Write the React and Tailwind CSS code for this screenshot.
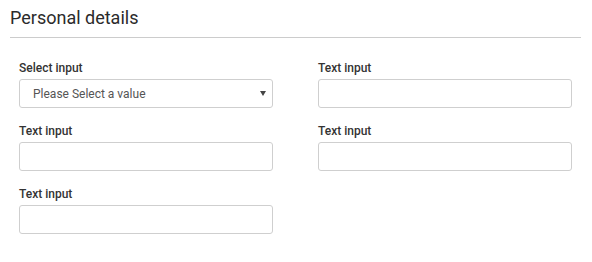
import React from "react";

const Field = ({ label, children }) => (
  <div className="flex flex-col">
    <label className="text-[12px] leading-[16px] font-medium text-[#333] mb-[3px]">
      {label}
    </label>
    {children}
  </div>
);

const TextBox = () => (
  <input
    type="text"
    className="h-[29px] w-full rounded-[3px] border border-[#cfcfcf] bg-white px-3 text-[12px] outline-none"
  />
);

const App = () => {
  return (
    <div className="w-[592px] h-[262px] bg-white font-['Roboto',sans-serif]">
      {/* Header */}
      <div className="mx-[10px] w-[571px] border-b border-[#cccccc] pt-[6px] pb-[7px]">
        <h2 className="text-[18px] leading-[24px] text-[#2b2b2b]">Personal details</h2>
      </div>

      {/* Form */}
      <div className="mt-[22px] pl-[19px] grid grid-cols-[254px_254px] gap-x-[45px] gap-y-[15px]">
        <Field label="Select input">
          <div className="relative">
            <select className="h-[29px] w-full appearance-none rounded-[3px] border border-[#cfcfcf] bg-white pl-[13px] text-[12px] text-[#555] outline-none">
              <option>Please Select a value</option>
            </select>
            <span className="pointer-events-none absolute right-[7px] top-[12px] h-0 w-0 border-x-[3px] border-t-[5px] border-x-transparent border-t-[#444]" />
          </div>
        </Field>
        <Field label="Text input">
          <TextBox />
        </Field>
        <Field label="Text input">
          <TextBox />
        </Field>
        <Field label="Text input">
          <TextBox />
        </Field>
        <Field label="Text input">
          <TextBox />
        </Field>
      </div>
    </div>
  );
};

export default App;
